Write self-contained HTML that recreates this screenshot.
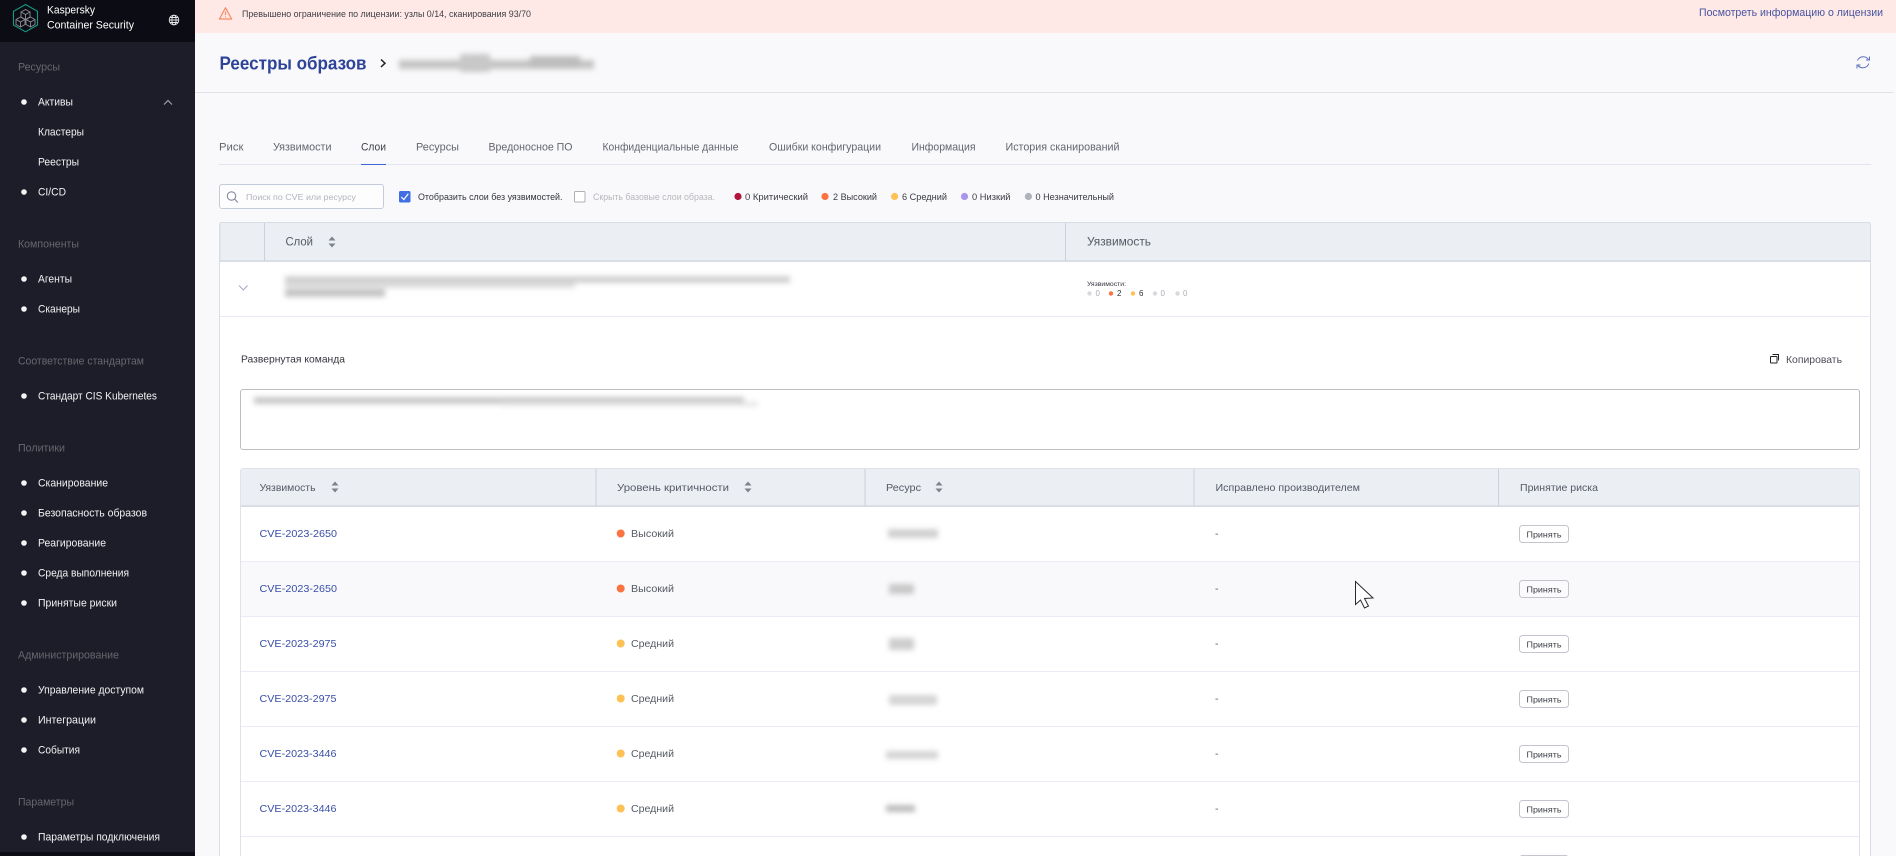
<!DOCTYPE html>
<html lang="ru"><head><meta charset="utf-8"><title>Реестры образов</title>
<style>
html,body{margin:0;padding:0;width:1896px;height:856px;overflow:hidden;background:#f9f9fb}
svg{display:block}
text{font-family:"Liberation Sans","Noto Sans CJK SC",sans-serif;dominant-baseline:central;white-space:pre;transform:translateY(.7px)}
.side{font-size:11px;fill:#f2f2f4}
.sec{font-size:11px;fill:#67676f}
.tab{font-size:11px;fill:#62666f}
.t10{font-size:9.5px;fill:#3a3d44}
.th{font-size:10.5px;fill:#555a64}
.thb{font-size:11.5px;fill:#555a64}
.cve{font-size:10.5px;fill:#3a4ea8}
.sev{font-size:10.5px;fill:#555a62}
.btn{font-size:8.5px;fill:#3a3d44}
</style></head><body>
<svg xmlns="http://www.w3.org/2000/svg" width="1896" height="856" viewBox="0 0 1896 856">
<defs>
<filter id="b" filterUnits="userSpaceOnUse" x="0" y="0" width="1896" height="856"><feGaussianBlur stdDeviation="2.6"/></filter>
<g id="su"><path d="M-3.5 -1.5L0 -5.5L3.5 -1.5Z" fill="#7d828d"/><path d="M-3.5 1.5L0 5.5L3.5 1.5Z" fill="#7d828d"/></g>
</defs>
<!-- backgrounds -->
<rect width="1896" height="856" fill="#f9f9fb"/>
<rect x="195" width="1701" height="33" fill="#ffe9e7"/>
<rect x="195" y="92" width="1699" height="1" fill="#e2e3e8"/>
<rect width="195" height="856" fill="#1d1d29"/>
<rect width="195" height="42" fill="#0c0c15"/>
<rect y="852" width="195" height="4" fill="#0c0c15"/>

<!-- logo -->
<path d="M25.5 4.5L37.5 11.3V25L25.5 31.8L13.5 25V11.3Z" fill="none" stroke="#149a86" stroke-width="1.1"/>
<g fill="none" stroke="#8e8e96" stroke-width=".9"><path d="M25.5 9.5L30 12L30 17L25.5 19.5L21 17L21 12Z M21 12L25.5 14.5L30 12 M25.5 14.5V19.5"/><path d="M20.5 17L25 19.5V24.5L20.5 27L16 24.5V19.5Z M16 19.5L20.5 22L25 19.5 M20.5 22V27"/><path d="M30.5 17L35 19.5V24.5L30.5 27L26 24.5V19.5Z M26 19.5L30.5 22L35 19.5 M30.5 22V27"/></g>
<text x="47" y="10" class="side" textLength="48" lengthAdjust="spacingAndGlyphs" style="fill:#fff">Kaspersky</text>
<text x="47" y="25" class="side" textLength="87" lengthAdjust="spacingAndGlyphs" style="fill:#fff">Container Security</text>
<g fill="none" stroke="#e8e8ec" stroke-width=".9"><circle cx="174" cy="20" r="4.8"/><ellipse cx="174" cy="20" rx="2.1" ry="4.8"/><path d="M169.2 20H178.8M170 17.5H178M170 22.5H178"/></g>

<!-- sidebar -->
<g fill="#f4f4f6">
<circle cx="24" cy="102" r="2.8"/><circle cx="24" cy="192" r="2.8"/><circle cx="24" cy="279" r="2.8"/><circle cx="24" cy="309" r="2.8"/><circle cx="24" cy="396" r="2.8"/><circle cx="24" cy="483" r="2.8"/><circle cx="24" cy="513" r="2.8"/><circle cx="24" cy="543" r="2.8"/><circle cx="24" cy="573" r="2.8"/><circle cx="24" cy="603" r="2.8"/><circle cx="24" cy="690" r="2.8"/><circle cx="24" cy="720" r="2.8"/><circle cx="24" cy="750" r="2.8"/><circle cx="24" cy="837" r="2.8"/>
</g>
<path d="M164 104.5L168 100.5L172 104.5" fill="none" stroke="#a0a0a8" stroke-width="1.2"/>
<g>
<text class="sec" x="18" y="67" textLength="42" lengthAdjust="spacingAndGlyphs">Ресурсы</text>
<text class="side" x="38" y="102" textLength="35" lengthAdjust="spacingAndGlyphs">Активы</text>
<text class="side" x="38" y="132" textLength="46" lengthAdjust="spacingAndGlyphs">Кластеры</text>
<text class="side" x="38" y="162" textLength="41" lengthAdjust="spacingAndGlyphs">Реестры</text>
<text class="side" x="38" y="192" textLength="28" lengthAdjust="spacingAndGlyphs">CI/CD</text>
<text class="sec" x="18" y="244" textLength="61" lengthAdjust="spacingAndGlyphs">Компоненты</text>
<text class="side" x="38" y="279" textLength="34" lengthAdjust="spacingAndGlyphs">Агенты</text>
<text class="side" x="38" y="309" textLength="42" lengthAdjust="spacingAndGlyphs">Сканеры</text>
<text class="sec" x="18" y="361" textLength="126" lengthAdjust="spacingAndGlyphs">Соответствие стандартам</text>
<text class="side" x="38" y="396" textLength="119" lengthAdjust="spacingAndGlyphs">Стандарт CIS Kubernetes</text>
<text class="sec" x="18" y="448" textLength="47" lengthAdjust="spacingAndGlyphs">Политики</text>
<text class="side" x="38" y="483" textLength="70" lengthAdjust="spacingAndGlyphs">Сканирование</text>
<text class="side" x="38" y="513" textLength="109" lengthAdjust="spacingAndGlyphs">Безопасность образов</text>
<text class="side" x="38" y="543" textLength="68" lengthAdjust="spacingAndGlyphs">Реагирование</text>
<text class="side" x="38" y="573" textLength="91" lengthAdjust="spacingAndGlyphs">Среда выполнения</text>
<text class="side" x="38" y="603" textLength="79" lengthAdjust="spacingAndGlyphs">Принятые риски</text>
<text class="sec" x="18" y="655" textLength="101" lengthAdjust="spacingAndGlyphs">Администрирование</text>
<text class="side" x="38" y="690" textLength="106" lengthAdjust="spacingAndGlyphs">Управление доступом</text>
<text class="side" x="38" y="720" textLength="58" lengthAdjust="spacingAndGlyphs">Интеграции</text>
<text class="side" x="38" y="750" textLength="42" lengthAdjust="spacingAndGlyphs">События</text>
<text class="sec" x="18" y="802" textLength="56" lengthAdjust="spacingAndGlyphs">Параметры</text>
<text class="side" x="38" y="837" textLength="122" lengthAdjust="spacingAndGlyphs">Параметры подключения</text>
</g>

<!-- banner -->
<g fill="none" stroke="#f68a60" stroke-width="1.2" stroke-linejoin="round"><path d="M225.5 7.8L231.6 19H219.4Z"/><path d="M225.5 11.5V15.2M225.5 16.4V17.4"/></g>
<text x="242" y="14" textLength="289" lengthAdjust="spacingAndGlyphs" style="font-size:9.5px;fill:#3d3f46">Превышено ограничение по лицензии: узлы 0/14, сканирования 93/70</text>
<text x="1699" y="12.5" textLength="184" lengthAdjust="spacingAndGlyphs" style="font-size:11px;fill:#46549f">Посмотреть информацию о лицензии</text>

<!-- title -->
<text x="219.5" y="63" textLength="147" lengthAdjust="spacingAndGlyphs" style="font-size:18px;font-weight:bold;fill:#2e4398">Реестры образов</text>
<path d="M381 59.5L385 63.2L381 67" fill="none" stroke="#20222a" stroke-width="1.5"/>
<g filter="url(#b)"><rect x="399" y="60" width="195" height="9" fill="#c4c4c4"/><rect x="460" y="54" width="30" height="18" fill="#c8c8c8"/><rect x="530" y="56" width="50" height="12" fill="#bdbdbd"/></g>
<g fill="none" stroke="#5a72bd" stroke-width="1"><path d="M1857.5 60.5A6.3 6.3 0 0 1 1868.5 59.5"/><path d="M1868.8 63.5A6.3 6.3 0 0 1 1858 65.5"/><path d="M1869.5 56.5V60H1866M1857 68.5V65H1860.5"/></g>

<!-- tabs -->
<rect x="219" y="164" width="1652" height="1" fill="#e3e4ef"/>
<rect x="361" y="164" width="25" height="1" fill="#3a66d6"/>
<text class="tab" x="219" y="147" textLength="24.5" lengthAdjust="spacingAndGlyphs">Риск</text>
<text class="tab" x="273" y="147" textLength="58.5" lengthAdjust="spacingAndGlyphs">Уязвимости</text>
<text class="tab" x="361" y="147" textLength="25" lengthAdjust="spacingAndGlyphs" style="fill:#3c4048">Слои</text>
<text class="tab" x="416" y="147" textLength="43" lengthAdjust="spacingAndGlyphs">Ресурсы</text>
<text class="tab" x="488.5" y="147" textLength="84" lengthAdjust="spacingAndGlyphs">Вредоносное ПО</text>
<text class="tab" x="602.5" y="147" textLength="136" lengthAdjust="spacingAndGlyphs">Конфиденциальные данные</text>
<text class="tab" x="769" y="147" textLength="112" lengthAdjust="spacingAndGlyphs">Ошибки конфигурации</text>
<text class="tab" x="911.5" y="147" textLength="64" lengthAdjust="spacingAndGlyphs">Информация</text>
<text class="tab" x="1005.5" y="147" textLength="114" lengthAdjust="spacingAndGlyphs">История сканирований</text>

<!-- filter row -->
<rect x="219.5" y="184.5" width="164" height="24" rx="2.5" fill="#fdfdfe" stroke="#c6cbdc"/>
<g fill="none" stroke="#858ba0" stroke-width="1.1"><circle cx="231.5" cy="196" r="4.2"/><path d="M234.6 199.2L238 202.5"/></g>
<text x="246" y="196.5" textLength="110" lengthAdjust="spacingAndGlyphs" style="font-size:8.5px;fill:#b2b5bf">Поиск по CVE или ресурсу</text>
<rect x="399" y="191" width="11.5" height="11.5" rx="1.5" fill="#3f6fe2"/>
<path d="M401.3 197L403.8 199.6L408.3 193.8" fill="none" stroke="#fff" stroke-width="1.2"/>
<text x="418" y="196.5" textLength="144.5" lengthAdjust="spacingAndGlyphs" style="font-size:8.8px;fill:#33363d">Отобразить слои без уязвимостей.</text>
<rect x="574.5" y="191.5" width="10.5" height="10.5" rx="1" fill="#fff" stroke="#aeb0b6"/>
<text x="593" y="196.5" textLength="122" lengthAdjust="spacingAndGlyphs" style="font-size:8.8px;fill:#b6b8bd">Скрыть базовые слои образа.</text>
<circle cx="738" cy="196.5" r="3.6" fill="#b0153a"/>
<text class="t10" x="745" y="196.5" textLength="63" lengthAdjust="spacingAndGlyphs" style="font-size:8.8px">0 Критический</text>
<circle cx="825" cy="196.5" r="3.6" fill="#fb7341"/>
<text class="t10" x="833" y="196.5" textLength="44" lengthAdjust="spacingAndGlyphs" style="font-size:8.8px">2 Высокий</text>
<circle cx="894.6" cy="196.5" r="3.6" fill="#fdc155"/>
<text class="t10" x="902" y="196.5" textLength="45" lengthAdjust="spacingAndGlyphs" style="font-size:8.8px">6 Средний</text>
<circle cx="964.5" cy="196.5" r="3.6" fill="#a895ee"/>
<text class="t10" x="972" y="196.5" textLength="38.5" lengthAdjust="spacingAndGlyphs" style="font-size:8.8px">0 Низкий</text>
<circle cx="1028.4" cy="196.5" r="3.6" fill="#aeb2ba"/>
<text class="t10" x="1035.5" y="196.5" textLength="78.5" lengthAdjust="spacingAndGlyphs" style="font-size:8.8px">0 Незначительный</text>

<!-- outer panel -->
<rect x="219.5" y="222.5" width="1651" height="640" rx="2" fill="#fff" stroke="#dadde6"/>
<path d="M220 261V224.5a2 2 0 0 1 2-2H1868.5a2 2 0 0 1 2 2V261Z" fill="#ebeef3" stroke="#dadde6"/>
<rect x="220" y="260.5" width="1650" height="1.2" fill="#c9cdd8"/>
<rect x="264" y="223" width="1" height="38" fill="#ccd0da"/>
<rect x="1065" y="223" width="1" height="38" fill="#ccd0da"/>
<text class="thb" x="285.5" y="242" textLength="27.5" lengthAdjust="spacingAndGlyphs">Слой</text>
<use href="#su" x="332" y="242"/>
<text class="thb" x="1087" y="242" textLength="64" lengthAdjust="spacingAndGlyphs">Уязвимость</text>
<path d="M239 285.5L243.3 290L247.5 285.5" fill="none" stroke="#a9abc8" stroke-width="1.1"/>
<g filter="url(#b)">
<rect x="285" y="276" width="505" height="7" fill="#d0d0d0"/>
<rect x="285" y="283" width="290" height="5" fill="#dcdcdc"/>
<rect x="285" y="289" width="100" height="8" fill="#c4c4c4"/>
</g>
<text x="1087" y="284" textLength="39" lengthAdjust="spacingAndGlyphs" style="font-size:6.5px;fill:#33363d">Уязвимости:</text>
<g>
<circle cx="1089.5" cy="293.5" r="2.2" fill="#d7d9de"/><text x="1095.5" y="293" style="font-size:8px;fill:#aaadb3">0</text>
<circle cx="1111" cy="293.5" r="2.2" fill="#fb7341"/><text x="1117" y="293" style="font-size:8px;fill:#2c2e33">2</text>
<circle cx="1133" cy="293.5" r="2.2" fill="#fdc155"/><text x="1139" y="293" style="font-size:8px;fill:#2c2e33">6</text>
<circle cx="1155" cy="293.5" r="2.2" fill="#d7d9de"/><text x="1160.5" y="293" style="font-size:8px;fill:#aaadb3">0</text>
<circle cx="1177.5" cy="293.5" r="2.2" fill="#d7d9de"/><text x="1183" y="293" style="font-size:8px;fill:#aaadb3">0</text>
</g>
<rect x="220" y="316" width="1650" height="1" fill="#e8e9f6"/>

<text x="241" y="359" textLength="104" lengthAdjust="spacingAndGlyphs" style="font-size:10.5px;fill:#33363d">Развернутая команда</text>
<g fill="none" stroke="#22242a" stroke-width="1"><rect x="1770.5" y="356.5" width="6.5" height="6.5" rx=".5"/><path d="M1772.5 354.5H1778.5V360.5"/></g>
<text x="1786" y="359.5" textLength="56" lengthAdjust="spacingAndGlyphs" style="font-size:10.5px;fill:#4a4d55">Копировать</text>
<rect x="240.5" y="389.5" width="1619" height="60" rx="2.5" fill="#fff" stroke="#bdbec2"/>
<g filter="url(#b)">
<rect x="254" y="397" width="490" height="7" fill="#c8c8ca"/>
<rect x="500" y="402" width="258" height="4" fill="#e2e2e2"/>
</g>

<!-- inner table -->
<rect x="240.5" y="468.5" width="1619" height="400" rx="2.5" fill="#fff" stroke="#dfe2ea"/>
<path d="M241 506V471a2 2 0 0 1 2-2H1857a2 2 0 0 1 2 2V506Z" fill="#ebeef3"/>
<rect x="241" y="505.5" width="1618" height="1.2" fill="#c9ced8"/>
<rect x="595.5" y="469" width="1" height="37" fill="#cdd1da"/>
<rect x="864.5" y="469" width="1" height="37" fill="#cdd1da"/>
<rect x="1193.5" y="469" width="1" height="37" fill="#cdd1da"/>
<rect x="1498" y="469" width="1" height="37" fill="#cdd1da"/>
<text class="th" x="259.5" y="487.5" textLength="56" lengthAdjust="spacingAndGlyphs">Уязвимость</text>
<use href="#su" x="335" y="487"/>
<text class="th" x="617" y="487.5" textLength="112" lengthAdjust="spacingAndGlyphs">Уровень критичности</text>
<use href="#su" x="748" y="487"/>
<text class="th" x="886" y="487.5" textLength="35" lengthAdjust="spacingAndGlyphs">Ресурс</text>
<use href="#su" x="939" y="487"/>
<text class="th" x="1215.5" y="487.5" textLength="144.5" lengthAdjust="spacingAndGlyphs">Исправлено производителем</text>
<text class="th" x="1520" y="487.5" textLength="78" lengthAdjust="spacingAndGlyphs">Принятие риска</text>

<rect x="241" y="562" width="1618" height="54" fill="#f9f9fc"/>
<g fill="#eaebf6">
<rect x="241" y="561" width="1618" height="1"/><rect x="241" y="616" width="1618" height="1"/><rect x="241" y="671" width="1618" height="1"/><rect x="241" y="726" width="1618" height="1"/><rect x="241" y="781" width="1618" height="1"/><rect x="241" y="836" width="1618" height="1"/>
</g>

<text class="cve" x="259.5" y="533.5" textLength="77.5" lengthAdjust="spacingAndGlyphs">CVE-2023-2650</text>
<text class="cve" x="259.5" y="588.5" textLength="77.5" lengthAdjust="spacingAndGlyphs">CVE-2023-2650</text>
<text class="cve" x="259.5" y="643.5" textLength="77" lengthAdjust="spacingAndGlyphs">CVE-2023-2975</text>
<text class="cve" x="259.5" y="698.5" textLength="77" lengthAdjust="spacingAndGlyphs">CVE-2023-2975</text>
<text class="cve" x="259.5" y="753.5" textLength="77" lengthAdjust="spacingAndGlyphs">CVE-2023-3446</text>
<text class="cve" x="259.5" y="808.5" textLength="77" lengthAdjust="spacingAndGlyphs">CVE-2023-3446</text>

<circle cx="620.7" cy="533.5" r="4" fill="#fb7341"/><text class="sev" x="631" y="533.5" textLength="43" lengthAdjust="spacingAndGlyphs">Высокий</text>
<circle cx="620.7" cy="588.5" r="4" fill="#fb7341"/><text class="sev" x="631" y="588.5" textLength="43" lengthAdjust="spacingAndGlyphs">Высокий</text>
<circle cx="620.7" cy="643.5" r="4" fill="#fdc155"/><text class="sev" x="631" y="643.5" textLength="43" lengthAdjust="spacingAndGlyphs">Средний</text>
<circle cx="620.7" cy="698.5" r="4" fill="#fdc155"/><text class="sev" x="631" y="698.5" textLength="43" lengthAdjust="spacingAndGlyphs">Средний</text>
<circle cx="620.7" cy="753.5" r="4" fill="#fdc155"/><text class="sev" x="631" y="753.5" textLength="43" lengthAdjust="spacingAndGlyphs">Средний</text>
<circle cx="620.7" cy="808.5" r="4" fill="#fdc155"/><text class="sev" x="631" y="808.5" textLength="43" lengthAdjust="spacingAndGlyphs">Средний</text>

<g filter="url(#b)">
<rect x="888" y="529" width="50" height="9" fill="#d0d0d0"/>
<rect x="889" y="584" width="25" height="10" fill="#c8c8c8"/>
<rect x="889" y="638" width="25" height="12" fill="#cdcdcd"/>
<rect x="889" y="695" width="48" height="10" fill="#d4d4d4"/>
<rect x="886" y="751" width="52" height="8" fill="#d4d4d4"/>
<rect x="886" y="805" width="29" height="7" fill="#bcbcbc"/>
</g>

<g>
<text class="sev" x="1215" y="533.5">-</text><text class="sev" x="1215" y="588.5">-</text><text class="sev" x="1215" y="643.5">-</text><text class="sev" x="1215" y="698.5">-</text><text class="sev" x="1215" y="753.5">-</text><text class="sev" x="1215" y="808.5">-</text>
</g>

<g fill="#fff" stroke="#c3c5cc">
<rect x="1519.5" y="525.5" width="49" height="17" rx="3"/>
<rect x="1519.5" y="580.5" width="49" height="17" rx="3" fill="#fbfbfd"/>
<rect x="1519.5" y="635.5" width="49" height="17" rx="3"/>
<rect x="1519.5" y="690.5" width="49" height="17" rx="3"/>
<rect x="1519.5" y="745.5" width="49" height="17" rx="3"/>
<rect x="1519.5" y="800.5" width="49" height="17" rx="3"/>
<rect x="1519.5" y="855.5" width="49" height="17" rx="3"/>
</g>
<text class="btn" x="1526.5" y="534" textLength="35" lengthAdjust="spacingAndGlyphs">Принять</text>
<text class="btn" x="1526.5" y="589" textLength="35" lengthAdjust="spacingAndGlyphs">Принять</text>
<text class="btn" x="1526.5" y="644" textLength="35" lengthAdjust="spacingAndGlyphs">Принять</text>
<text class="btn" x="1526.5" y="699" textLength="35" lengthAdjust="spacingAndGlyphs">Принять</text>
<text class="btn" x="1526.5" y="754" textLength="35" lengthAdjust="spacingAndGlyphs">Принять</text>
<text class="btn" x="1526.5" y="809" textLength="35" lengthAdjust="spacingAndGlyphs">Принять</text>

<!-- cursor -->
<path d="M1355.5 581.5V604.5L1360.5 600L1364.5 608L1368.5 606L1364.5 598.5L1373 598Z" fill="#fff" stroke="#2a2a2e" stroke-width="1" stroke-linejoin="miter"/>
</svg>
</body></html>
